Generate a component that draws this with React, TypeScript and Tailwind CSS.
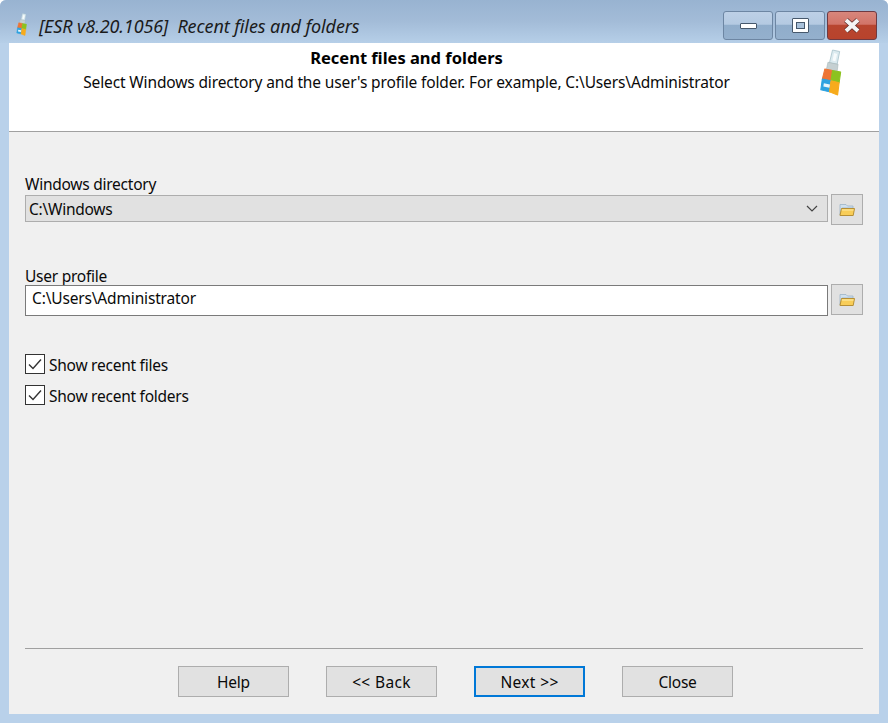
import type { ReactNode } from "react";

/* app logo: usb stick with the four coloured panes */
function StickLogo({ w, h }: { w: number; h: number }) {
  return (
    <svg width={w} height={h} viewBox="0 0 24 48" fill="none" strokeLinejoin="round">
      <path d="M13 1 L20 2.5 L17.5 15 L10 13.5 Z" fill="#dcebf0" stroke="#a9c3cc" strokeWidth="0.8" />
      <path d="M14.5 4 L17.5 4.8 L15.8 12 L13 11.3 Z" fill="#f7fbfc" />
      <path d="M8.5 13 L18.5 15 L17.5 22 L7 20 Z" fill="#c5d0d2" stroke="#9fb0b2" strokeWidth="0.5" />
      <path d="M5.5 19.5 L13 21 L11.5 31 L3 29.5 Z" fill="#ee7434" stroke="#ee7434" strokeWidth="1" />
      <path d="M13 21 L21 22.5 L19.5 33 L11.5 31 Z" fill="#8cc21f" stroke="#8cc21f" strokeWidth="1" />
      <path d="M3 29.5 L11.5 31 L10 42 L1.5 40 Z" fill="#2ea2e0" stroke="#2ea2e0" strokeWidth="1" />
      <path d="M11.5 31 L19.5 33 L18 45 L10 42 Z" fill="#f7ab1c" stroke="#f7ab1c" strokeWidth="1" />
      <path d="M4.5 33.5 L10.5 34.7 L10 38 L4 36.8 Z" fill="#e8f5fc" />
    </svg>
  );
}

function FolderIcon() {
  return (
    <svg width="16" height="14" viewBox="0 0 16 14" fill="none">
      <path d="M1 12 V1.5 H7 L8.5 3 H14 V5 H3 Z" fill="#cfe0ee" stroke="#9db4c6" strokeWidth="0.8" />
      <path d="M1 12.5 L2.5 5.5 H15.5 L14.2 12.5 Z" fill="#f8cd58" stroke="#b68f35" strokeWidth="1" />
      <path d="M2.8 7 H14.5" stroke="#fde9a0" strokeWidth="1.2" />
    </svg>
  );
}

function FolderButton() {
  return (
    <button
      type="button"
      className="ml-[3px] flex h-[31px] w-[32px] shrink-0 items-center justify-center border border-[#adadad] bg-[#e1e1e1] pr-[1px]"
    >
      <FolderIcon />
    </button>
  );
}

function CheckRow({ label }: { label: string }) {
  return (
    <label className="flex h-[20px] items-center">
      <span className="flex h-[20px] w-[20px] items-center justify-center border border-[#333333] bg-white">
        <svg width="14" height="12" viewBox="0 0 14 12" fill="none">
          <path d="M1 6.5 L5 10.5 L13 1.5" stroke="#333333" strokeWidth="1.4" />
        </svg>
      </span>
      <span className="ml-[4px] mt-[4px]">{label}</span>
    </label>
  );
}

function DialogButton({ children, focused, wide }: { children: ReactNode; focused?: boolean; wide?: boolean }) {
  return (
    <button
      type="button"
      className={`flex h-[31px] w-[111px] items-center justify-center bg-[#e1e1e1] pt-[2px] ${
        focused ? "border-2 border-[#0078d7]" : "border border-[#adadad]"
      } ${wide ? "tracking-[0.35px]" : ""}`}
    >
      {children}
    </button>
  );
}

function WinButton({ children, close }: { children: ReactNode; close?: boolean }) {
  return (
    <div
      className={`flex h-[29px] w-[50px] items-center justify-center rounded-[3px] border ${
        close
          ? "border-[#6e3a42] bg-[linear-gradient(#d8867c_0%,#d27468_45%,#b8452f_50%,#b8432c_100%)]"
          : "border-[#6d86a3] bg-[linear-gradient(#bdd0e6_0%,#b4cae2_45%,#90adcb_50%,#94b0cd_100%)]"
      }`}
    >
      {children}
    </div>
  );
}

export default function App() {
  return (
    <div className="flex h-[723px] w-[888px] flex-col overflow-hidden rounded-t-[6px] bg-[#b9d1ea] font-['Noto_Sans',sans-serif] text-[15.5px] tracking-[-0.25px] text-[#0a0a0a]">
      {/* title bar */}
      <div className="flex h-[43px] shrink-0 items-start bg-[linear-gradient(#98b3d1_0%,#a3bcd8_50%,#b6cfe8_100%)] pl-[14px] pr-[11px]">
        <div className="mt-[13px]">
          <StickLogo w={16} h={24} />
        </div>
        <span className="mt-[14px] ml-[9px] whitespace-pre text-[18px] leading-[24px] tracking-[-0.1px] italic text-[#1b1b1b]">
          [ESR v8.20.1056]  Recent files and folders
        </span>
        <div className="mt-[11px] ml-auto flex gap-[2px]">
          <WinButton>
            <span className="h-[6px] w-[17px] rounded-[1px] border border-[#46586c] bg-white" />
          </WinButton>
          <WinButton>
            <span className="flex h-[15px] w-[17px] items-center justify-center rounded-[1px] border border-[#46586c] bg-white">
              <span className="h-[7px] w-[9px] border border-[#46586c] bg-[#a9c1da]" />
            </span>
          </WinButton>
          <WinButton close>
            <svg width="18" height="15" viewBox="0 0 18 15" fill="none">
              <path d="M3 2 L15 13 M15 2 L3 13" stroke="#5b2b28" strokeWidth="5.4" />
              <path d="M3 2 L15 13 M15 2 L3 13" stroke="#f4f4f4" strokeWidth="4" />
            </svg>
          </WinButton>
        </div>
      </div>

      {/* dialog client area */}
      <div className="mx-[9px] mb-[9px] flex flex-1 flex-col bg-[#f0f0f0]">
        <div className="relative h-[89px] shrink-0 border-b border-[#a0a0a0] bg-white text-center">
          <div className="mr-[75px] mt-[4px] text-[16.5px] leading-[22px] font-bold tracking-normal text-black">
            Recent files and folders
          </div>
          <div className="mr-[75px] mt-[2px] leading-[22px] tracking-[-0.14px]">
            Select Windows directory and the user's profile folder. For example, C:\Users\Administrator
          </div>
          <div className="absolute left-[808px] top-[6px]">
            <StickLogo w={29} h={49} />
          </div>
        </div>

        <div className="flex flex-1 flex-col px-[16px]">
          <div className="mt-[42px] leading-[20px]">Windows directory</div>
          <div className="flex items-start">
            <div className="mt-[1px] flex h-[27px] flex-1 items-center justify-between border border-[#adadad] bg-[#e1e1e1] pl-[3px] pr-[9px] pt-[2px]">
              <span>C:\Windows</span>
              <svg width="12" height="7" viewBox="0 0 12 7" fill="none" className="-mt-[2px]">
                <path d="M1 1 L6 6 L11 1" stroke="#444444" strokeWidth="1.2" />
              </svg>
            </div>
            <FolderButton />
          </div>

          <div className="mt-[41px] leading-[20px]">User profile</div>
          <div className="-mt-[2px] flex items-start">
            <div className="mt-[1px] flex h-[31px] flex-1 items-center border border-[#7a7a7a] bg-white pl-[6px] pb-[3px] tracking-[-0.16px]">
              C:\Users\Administrator
            </div>
            <FolderButton />
          </div>

          <div className="mt-[38px] flex flex-col gap-[11px]">
            <CheckRow label="Show recent files" />
            <CheckRow label="Show recent folders" />
          </div>

          <div className="mt-auto border-t border-[#a0a0a0] pb-[17px] pt-[17px]">
            <div className="flex gap-[37px] pl-[153px]">
              <DialogButton>Help</DialogButton>
              <DialogButton wide>{"<< Back"}</DialogButton>
              <DialogButton focused wide>{"Next >>"}</DialogButton>
              <DialogButton>Close</DialogButton>
            </div>
          </div>
        </div>
      </div>
    </div>
  );
}
